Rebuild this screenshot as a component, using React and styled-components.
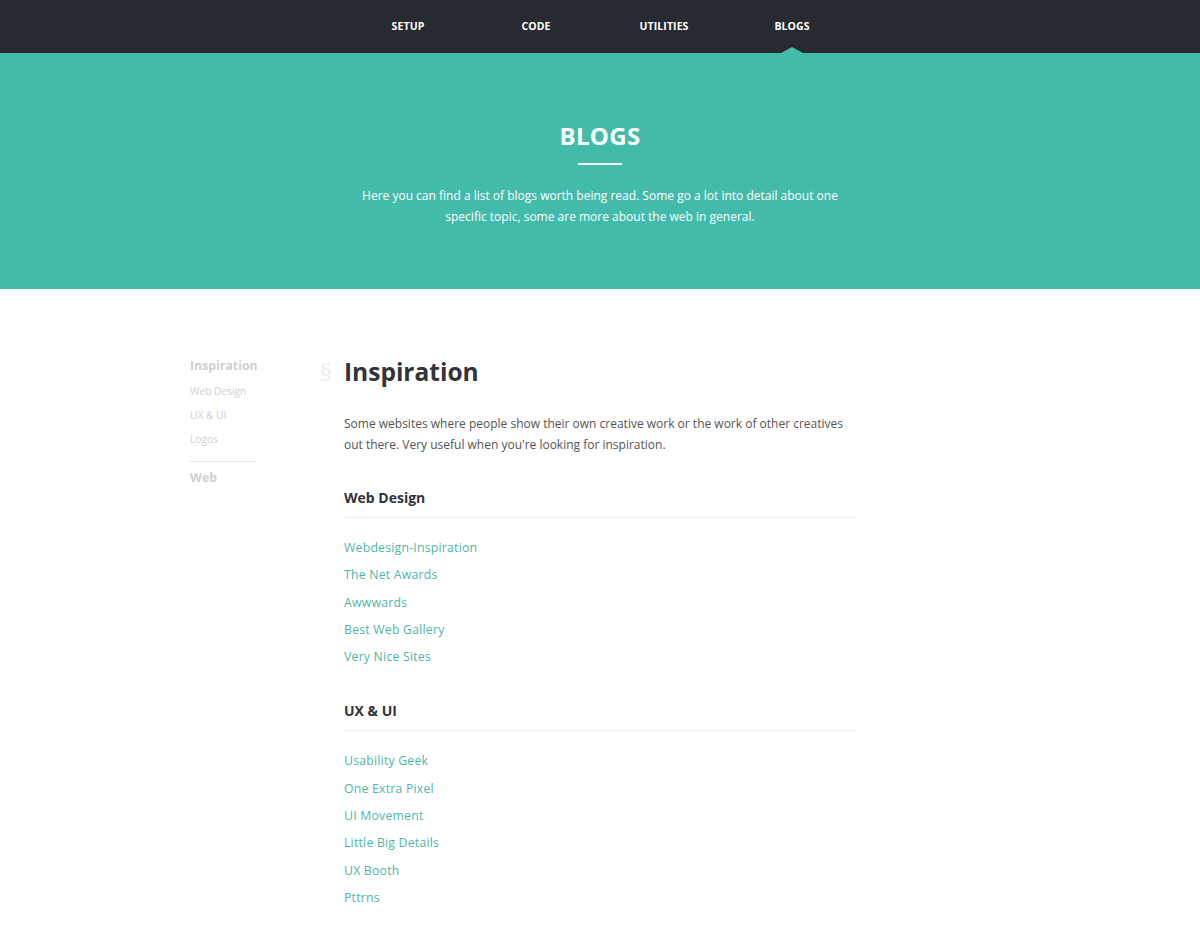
import React from "react";
import styled, { createGlobalStyle } from "styled-components";

const Global = createGlobalStyle`
  html, body { margin: 0; padding: 0; background: #fff; }
  body { font-family: "Open Sans", "Liberation Sans", sans-serif; -webkit-font-smoothing: antialiased; }
  * { box-sizing: border-box; }
`;

const NavBar = styled.nav`
  height: 53px;
  background: #272a30;
  display: flex;
  justify-content: center;
`;

const NavItem = styled.a`
  position: relative;
  width: 128px;
  display: flex;
  align-items: center;
  justify-content: center;
  padding-bottom: 2px;
  color: #fff;
  font-size: 10.5px;
  font-weight: 700;
  letter-spacing: 0.1px;
  text-decoration: none;
  text-transform: uppercase;
  &::after {
    content: "";
    display: ${(p) => (p.$active ? "block" : "none")};
    position: absolute;
    left: 50%;
    bottom: 0;
    margin-left: -11px;
    border-left: 11px solid transparent;
    border-right: 11px solid transparent;
    border-bottom: 6px solid #42bbab;
  }
`;

const Hero = styled.header`
  background: #42bbab;
  height: 236px;
  display: flex;
  flex-direction: column;
  align-items: center;
  padding-top: 67px;
  color: #fff;
`;

const HeroTitle = styled.h1`
  margin: 0;
  font-size: 24px;
  line-height: 32px;
  font-weight: 700;
  letter-spacing: 0.3px;
`;

const HeroRule = styled.div`
  width: 44px;
  height: 2px;
  background: #fff;
  margin-top: 11px;
`;

const HeroText = styled.p`
  margin: 20px 0 0;
  width: 490px;
  text-align: center;
  font-size: 12px;
  line-height: 21px;
`;

const Content = styled.div`
  width: 820px;
  margin: 0 auto;
  display: grid;
  grid-template-columns: 154px 512px;
  padding-top: 55px;
  padding-bottom: 40px;
`;

const Sidebar = styled.aside`
  padding-top: 12px;
  width: 67px;
  display: flex;
  flex-direction: column;
`;

const SideHead = styled.a`
  color: #cfcfcf;
  font-size: 12.3px;
  font-weight: 700;
  line-height: 20px;
  text-decoration: none;
`;

const SideItem = styled.a`
  color: #cfcfcf;
  font-size: 10.2px;
  line-height: 24px;
  text-decoration: none;
  margin-top: ${(p) => (p.$first ? "3px" : "0")};
`;

const SideRule = styled.div`
  height: 1px;
  background: #e8e8e8;
  margin: 10px 0 6px;
`;

const Main = styled.main`
  display: flex;
  flex-direction: column;
`;

const Title = styled.h2`
  position: relative;
  margin: 8px 0 0;
  font-size: 24.5px;
  line-height: 40px;
  font-weight: 700;
  color: #333438;
  &::before {
    content: "§";
    position: absolute;
    left: -24px;
    top: 0;
    color: #eeeeee;
    font-weight: 400;
    font-size: 23px;
  }
`;

const Intro = styled.p`
  margin: 21px 0 0;
  color: #555;
  font-size: 12px;
  line-height: 21px;
`;

const SubHead = styled.h3`
  margin: ${(p) => (p.$first ? "33px" : "31px")} 0 0;
  font-size: 14px;
  font-weight: 700;
  color: #333438;
  line-height: 20px;
  padding-bottom: 9px;
  border-bottom: 1px solid #f0f0f0;
`;

const LinkList = styled.ul`
  list-style: none;
  margin: 16px 0 0;
  padding: 0;
  display: flex;
  flex-direction: column;
`;

const LinkItem = styled.li`
  font-size: 12.3px;
  line-height: 27.3px;
  height: 27.3px;
`;

const Link = styled.a`
  color: #4fb6a7;
  text-decoration: none;
  letter-spacing: 0.2px;
`;

const webDesign = [
  "Webdesign-Inspiration",
  "The Net Awards",
  "Awwwards",
  "Best Web Gallery",
  "Very Nice Sites",
];
const uxui = [
  "Usability Geek",
  "One Extra Pixel",
  "UI Movement",
  "Little Big Details",
  "UX Booth",
  "Pttrns",
];

export default function App() {
  return (
    <>
      <Global />
      <NavBar>
        <NavItem>Setup</NavItem>
        <NavItem>Code</NavItem>
        <NavItem>Utilities</NavItem>
        <NavItem $active>Blogs</NavItem>
      </NavBar>
      <Hero>
        <HeroTitle>BLOGS</HeroTitle>
        <HeroRule />
        <HeroText>
          Here you can find a list of blogs worth being read. Some go a lot into detail about one
          specific topic, some are more about the web in general.
        </HeroText>
      </Hero>
      <Content>
        <Sidebar>
          <SideHead>Inspiration</SideHead>
          <SideItem $first>Web Design</SideItem>
          <SideItem>UX &amp; UI</SideItem>
          <SideItem>Logos</SideItem>
          <SideRule />
          <SideHead>Web</SideHead>
        </Sidebar>
        <Main>
          <Title>Inspiration</Title>
          <Intro>
            Some websites where people show their own creative work or the work of other creatives
            out there. Very useful when you're looking for inspiration.
          </Intro>
          <SubHead $first>Web Design</SubHead>
          <LinkList>
            {webDesign.map((l) => (
              <LinkItem key={l}><Link>{l}</Link></LinkItem>
            ))}
          </LinkList>
          <SubHead>UX &amp; UI</SubHead>
          <LinkList>
            {uxui.map((l) => (
              <LinkItem key={l}><Link>{l}</Link></LinkItem>
            ))}
          </LinkList>
        </Main>
      </Content>
    </>
  );
}
